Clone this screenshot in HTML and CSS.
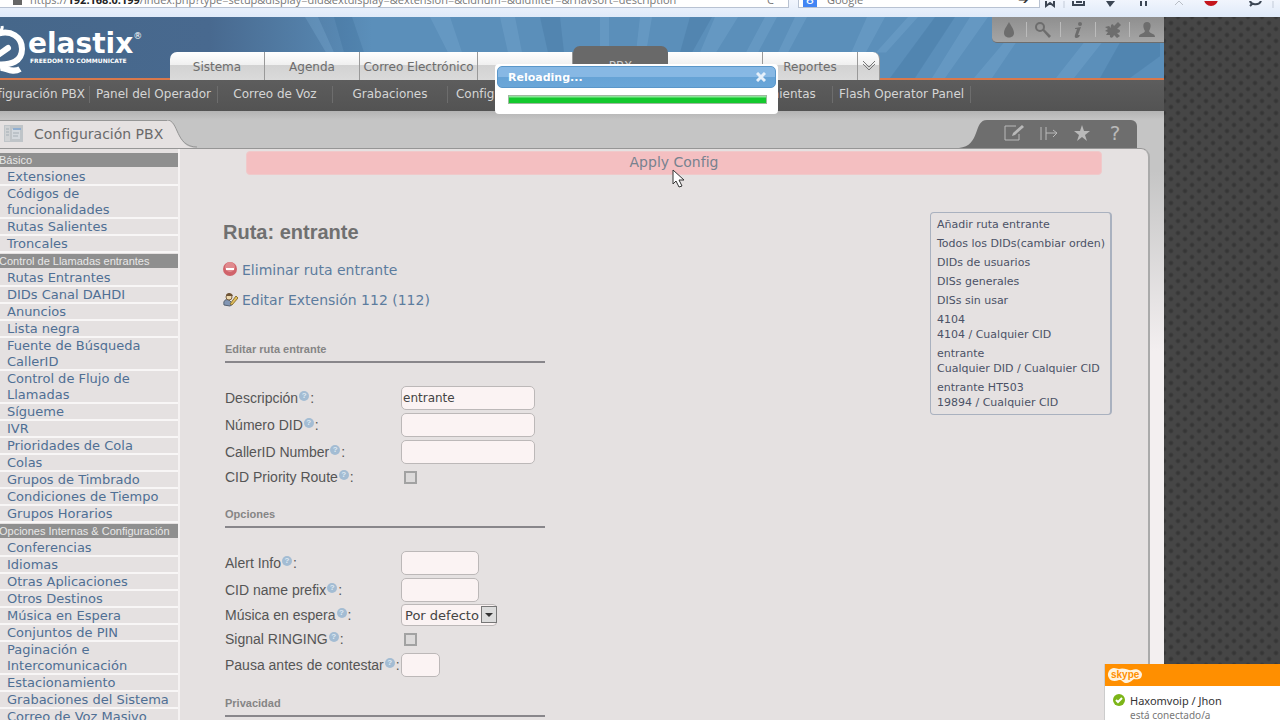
FILE: index.html
```html
<!DOCTYPE html>
<html lang="es">
<head>
    <meta charset="UTF-8">
    <meta name="viewport" content="width=device-width, initial-scale=1.0">
    <title>Elastix - Configuración PBX</title>
    <link rel="stylesheet" href="styles.css">
</head>
<body>

    <div class="browser">
        <div class="address">
            <span class="lock"></span>
            <span class="url">https://<b>192.168.0.199</b>/index.php?type=setup&amp;display=did&amp;extdisplay=&amp;extension=&amp;cidnum=&amp;didfilter=&amp;rnavsort=description</span>
            <span class="reload">C</span>
        </div>
        <div class="search">
            <span class="engine">8</span>
            <input type="text" placeholder="Google" aria-label="Buscar">
            <span class="go">➔</span>
        </div>
        <svg class="browser-icons" width="240" height="16" viewBox="0 -2 240 16" aria-hidden="true">
            <g fill="none" stroke="#3c4654" stroke-width="2">
                <path d="M6 -6V3L10 0L14 3V-6"/>
                <path d="M33 -6V2H44V-6M36 -1H42"/>
                <path d="M101 -4V3M106 -4V3"/>
                <path d="M210 -3C210 2 219 3 221 -2M210 3L213 0"/>
            </g>
            <path d="M66 -2H75L70 4Z" fill="#3c4654"/>
            <path d="M135 2L139 -2L143 2" fill="none" stroke="#b9bec6"/>
            <circle cx="171" cy="-4" r="7" fill="#c4151c"/>
            <path d="M24 -2V5M233 -2V5" stroke="#c3cbd8"/>
        </svg>
    </div>

    <div class="page">
        <div class="app">

            <header class="header">
                <svg class="rays" viewBox="0 0 1164 62" preserveAspectRatio="none" aria-hidden="true">
                    <g fill="#86b6dc" opacity=".25">
                        <path d="M305 0H318L334 36H326Z"/>
                        <path d="M430 0H450L462 36H448Z"/>
                        <path d="M500 0H515L522 36H508Z"/>
                        <path d="M600 0H609V30H600Z"/>
                        <path d="M640 0H652L646 36H636Z"/>
                        <path d="M715 0H738L716 36H700Z"/>
                        <path d="M765 0H777L758 36H746Z"/>
                        <path d="M795 0H807L788 36H778Z"/>
                        <path d="M867 0H885L852 62H840Z"/>
                        <path d="M908 0H918L886 36H876Z"/>
                        <path d="M970 0H988L945 62H932Z"/>
                        <path d="M1004 26H1016L992 62H974Z"/>
                        <path d="M1084 26H1102L1074 62H1056Z"/>
                    </g>
                    <g fill="#2f5f8a" opacity=".2">
                        <path d="M334 0H352L364 36H344Z"/>
                        <path d="M540 0H560L564 36H548Z"/>
                        <path d="M690 0H712L692 36H680Z"/>
                        <path d="M935 0H955L915 62H890Z"/>
                        <path d="M1120 26H1160V40L1130 62H1100Z"/>
                    </g>
                </svg>
                <div class="logo">
                    <svg width="28" height="56" viewBox="0 0 28 56" aria-hidden="true">
                        <g fill="none" stroke="#fff">
                            <path d="M-6 13C12 6 22 16 22 27C22 39 12 44 -6 42" stroke-width="6"/>
                            <path d="M-2 33L8 26" stroke-width="6" stroke-linecap="round"/>
                            <path d="M0 46C5 45 12 52 20 47" stroke-width="6"/>
                            <path d="M-3 9C0 9 3 8 2 4" stroke-width="3"/>
                        </g>
                    </svg>
                    <div class="brand">
                        <span class="brand-name">elastix<sup>®</sup></span>
                        <span class="slogan">FREEDOM TO COMMUNICATE</span>
                    </div>
                </div>
                <nav class="tabs">
                    <a class="tab" href="#">Sistema</a>
                    <a class="tab" href="#">Agenda</a>
                    <a class="tab wide" href="#">Correo Electrónico</a>
                    <span class="tab"></span>
                    <a class="tab active" href="#">PBX</a>
                    <span class="tab"></span>
                    <a class="tab" href="#">Reportes</a>
                    <button class="tab more" type="button" aria-label="Más">
                        <svg width="14" height="12" viewBox="0 0 14 12"><path d="M1 1L7 7L13 1M1 4L7 10L13 4" fill="none" stroke="#777" stroke-width="1"/></svg>
                    </button>
                </nav>
                <div class="tools">
                    <button type="button" aria-label="Tema"><svg width="18" height="18" viewBox="0 0 18 18"><path d="M9 1C11 5 14 8 14 12C14 18 4 18 4 12C4 8 7 5 9 1Z"/></svg></button>
                    <button type="button" aria-label="Buscar"><svg width="18" height="18" viewBox="0 0 18 18"><circle cx="6" cy="6" r="4" fill="none" stroke="#6d6d6d" stroke-width="2"/><path d="M8 9L10 8L17 15L15 17Z"/></svg></button>
                    <button type="button" aria-label="Información"><svg width="18" height="18" viewBox="0 0 18 18"><circle cx="11" cy="3" r="2"/><path d="M6 7L12 6L9 14L11 14L10 16C7 18 5 17 6 14L8 8L6 8Z"/></svg></button>
                    <button type="button" aria-label="Módulos"><svg width="18" height="18" viewBox="0 0 18 18"><path d="M1 6L5 5L7 7C6 3 9 2 10 5L14 1L17 4L13 8C17 8 17 12 13 12L16 15L13 17L10 14C9 18 5 17 6 14L2 14L4 11L1 10L4 8Z"/></svg></button>
                    <button type="button" aria-label="Usuario"><svg width="18" height="18" viewBox="0 0 18 18"><path d="M9 1C14 1 13 7 11 10C12 13 17 12 17 16H1C1 12 6 13 7 10C5 7 4 1 9 1Z"/></svg></button>
                </div>
            </header>

            <nav class="submenu">
                <a class="first" href="#">Configuración PBX</a>
                <a href="#">Panel del Operador</a>
                <a href="#">Correo de Voz</a>
                <a href="#">Grabaciones</a>
                <a class="batch" href="#">Configuración por Lotes</a>
                <a href="#">Herramientas</a>
                <a href="#">Flash Operator Panel</a>
            </nav>

            <div class="workspace">
                <div class="title-row">
                    <div class="title">
                        <svg width="19" height="19" viewBox="0 0 19 19" aria-hidden="true">
                            <path d="M0 1H19V18H0Z" fill="#bfc4c8"/>
                            <path d="M1 2H6V17H1Z" fill="#d0d2d4"/>
                            <path d="M8 5H16V15H8Z" fill="#d3d8dd"/>
                            <path d="M9 4H17V6H9Z" fill="#8fadd0"/>
                            <path d="M2 5H5M2 8H5M2 11H5M9 9H15M9 12H14" stroke="#a5aeb5"/>
                        </svg>
                        Configuración PBX
                    </div>
                    <svg class="title-curve" width="30" height="28" viewBox="0 0 30 28" aria-hidden="true">
                        <path d="M0 0C12 0 8 28 30 28H0Z" fill="#e5e1e1"/>
                        <path d="M0 0C12 0 8 27 30 27" fill="none" stroke="#969696"/>
                    </svg>
                    <svg class="actions-curve" width="28" height="28" viewBox="0 0 28 28" aria-hidden="true">
                        <path d="M28 0C14 0 22 26 0 28H28Z" fill="#6e6e6e"/>
                    </svg>
                    <div class="actions">
                        <button type="button" aria-label="Editar"><svg width="20" height="18" viewBox="0 0 20 18"><path d="M12 2H1V16H15V10" fill="none" stroke="#b9b9b9" stroke-width="1"/><path d="M8 12L9 9L18 1L20 3L11 11Z" fill="#b9b9b9"/></svg></button>
                        <button type="button" aria-label="Expandir"><svg width="20" height="18" viewBox="0 0 20 18"><path d="M2 3V16M7 3V16M7 9H18M14 6L18 9L14 13" fill="none" stroke="#b9b9b9" stroke-width="1"/></svg></button>
                        <button type="button" aria-label="Favorito"><svg width="18" height="18" viewBox="0 0 18 18"><path d="M9 1L11 7H17L12 11L14 17L9 13L4 17L6 11L1 7H7Z" fill="#b9b9b9"/></svg></button>
                        <button class="help-button" type="button">?</button>
                    </div>
                </div>

                <div class="panel">
                    <aside class="sidebar">
                        <h3>Básico</h3>
                        <ul>
                            <li><a href="#">Extensiones</a></li>
                            <li><a href="#">Códigos de<br>funcionalidades</a></li>
                            <li><a href="#">Rutas Salientes</a></li>
                            <li><a href="#">Troncales</a></li>
                        </ul>
                        <h3>Control de Llamadas entrantes</h3>
                        <ul>
                            <li><a href="#">Rutas Entrantes</a></li>
                            <li><a href="#">DIDs Canal DAHDI</a></li>
                            <li><a href="#">Anuncios</a></li>
                            <li><a href="#">Lista negra</a></li>
                            <li><a href="#">Fuente de Búsqueda<br>CallerID</a></li>
                            <li><a href="#">Control de Flujo de<br>Llamadas</a></li>
                            <li><a href="#">Sígueme</a></li>
                            <li><a href="#">IVR</a></li>
                            <li><a href="#">Prioridades de Cola</a></li>
                            <li><a href="#">Colas</a></li>
                            <li><a href="#">Grupos de Timbrado</a></li>
                            <li><a href="#">Condiciones de Tiempo</a></li>
                            <li><a href="#">Grupos Horarios</a></li>
                        </ul>
                        <h3>Opciones Internas &amp; Configuración</h3>
                        <ul>
                            <li><a href="#">Conferencias</a></li>
                            <li><a href="#">Idiomas</a></li>
                            <li><a href="#">Otras Aplicaciones</a></li>
                            <li><a href="#">Otros Destinos</a></li>
                            <li><a href="#">Música en Espera</a></li>
                            <li><a href="#">Conjuntos de PIN</a></li>
                            <li><a href="#">Paginación e<br>Intercomunicación</a></li>
                            <li><a href="#">Estacionamiento</a></li>
                            <li><a href="#">Grabaciones del Sistema</a></li>
                            <li><a href="#">Correo de Voz Masivo</a></li>
                        </ul>
                    </aside>

                    <main class="content">
                        <a class="apply" href="#">Apply Config</a>
                        <div class="columns">
                            <form class="route">
                                <h2>Ruta: entrante</h2>
                                <a class="route-link" href="#">
                                    <svg width="15" height="17" viewBox="0 0 15 17" aria-hidden="true"><circle cx="7" cy="7" r="7" fill="#d0636a"/><circle cx="7" cy="5" r="5" fill="#e08a8e"/><path d="M3 6H11V8H3Z" fill="#fff"/></svg>
                                    Eliminar ruta entrante
                                </a>
                                <a class="route-link" href="#">
                                    <svg width="15" height="17" viewBox="0 0 15 17" aria-hidden="true"><path d="M1 13C0 8 3 7 6 8L10 12L7 14Z" fill="#8296b4" stroke="#55606f"/><circle cx="6" cy="5" r="3" fill="#edd9b0" stroke="#7a6244"/><path d="M3 4C3 0 9 0 10 4" fill="#6e5436"/><path d="M7 12L13 4L15 6L9 13Z" fill="#e3bf5c" stroke="#8d7434"/></svg>
                                    Editar Extensión 112 (112)
                                </a>

                                <h5 class="first-section">Editar ruta entrante</h5>
                                <div class="row"><label for="description">Descripción<i>?</i>:</label><input type="text" id="description" value="entrante"></div>
                                <div class="row"><label for="did">Número DID<i>?</i>:</label><input type="text" id="did"></div>
                                <div class="row"><label for="callerid">CallerID Number<i>?</i>:</label><input type="text" id="callerid"></div>
                                <div class="row check"><label for="priority">CID Priority Route<i>?</i>:</label><input type="checkbox" id="priority"></div>

                                <h5>Opciones</h5>
                                <div class="row"><label for="alert">Alert Info<i>?</i>:</label><input class="medium" type="text" id="alert"></div>
                                <div class="row"><label for="prefix">CID name prefix<i>?</i>:</label><input class="medium" type="text" id="prefix"></div>
                                <div class="row check"><label for="music">Música en espera<i>?</i>:</label>
                                    <span class="select-box">
                                        <select id="music"><option>Por defecto</option></select>
                                        <span class="select-arrow"></span>
                                    </span>
                                </div>
                                <div class="row check"><label for="ringing">Signal RINGING<i>?</i>:</label><input type="checkbox" id="ringing"></div>
                                <div class="row"><label for="pause">Pausa antes de contestar<i>?</i>:</label><input class="short" type="text" id="pause"></div>

                                <h5>Privacidad</h5>
                            </form>

                            <nav class="rnav">
                                <a href="#">Añadir ruta entrante</a>
                                <a href="#">Todos los DIDs(cambiar orden)</a>
                                <a href="#">DIDs de usuarios</a>
                                <a href="#">DISs generales</a>
                                <a href="#">DISs sin usar</a>
                                <a href="#">4104<br>4104 / Cualquier CID</a>
                                <a href="#">entrante<br>Cualquier DID / Cualquier CID</a>
                                <a href="#">entrante HT503<br>19894 / Cualquier CID</a>
                            </nav>
                        </div>
                    </main>
                </div>
            </div>
        </div>
        <div class="backdrop"></div>
    </div>

    <div class="dialog" role="dialog" aria-labelledby="dialog-title">
        <div class="dialog-title">
            <span id="dialog-title">Reloading...</span>
            <button type="button" aria-label="Cerrar"><svg width="10" height="10" viewBox="0 0 10 10"><path d="M1 1L9 9M9 1L1 9" stroke="#e6f0fa" stroke-width="3"/></svg></button>
        </div>
        <div class="progress"></div>
    </div>

    <svg class="cursor" width="14" height="20" viewBox="0 0 14 20" aria-hidden="true">
        <path d="M1 1V15L4 12L7 18L10 17L7 11H12Z" fill="#fff" stroke="#333"/>
    </svg>

    <div class="toast">
        <div class="toast-head">
            <svg width="36" height="18" viewBox="0 0 36 18" aria-hidden="true">
                <path d="M4 2C7 0 10 2 12 2C17 0 22 4 25 3C29 1 34 3 35 7C35 12 31 13 27 12C24 14 23 16 18 16C15 15 16 13 12 13C8 15 3 14 2 11C0 8 1 4 4 2Z" fill="#fff3de"/>
                <text x="4" y="11" font-size="10" font-weight="bold" font-family="Liberation Sans, sans-serif" fill="#ff8f00">skype</text>
            </svg>
        </div>
        <div class="toast-body">
            <svg width="12" height="12" viewBox="0 0 12 12" aria-hidden="true"><circle cx="6" cy="6" r="6" fill="#7cb518"/><path d="M3 6L5 8L9 4" fill="none" stroke="#fff" stroke-width="2"/></svg>
            <div>
                <div class="contact">Haxomvoip / Jhon</div>
                <div class="status">está conectado/a</div>
            </div>
        </div>
    </div>

</body>
</html>
```

FILE: styles.css
```css
* { box-sizing: border-box; }
body { margin: 0; height: 100vh; overflow: hidden; position: relative; display: flex; flex-direction: column; font-family: "DejaVu Sans", sans-serif; font-size: 13px; color: #555; }
a { text-decoration: none; color: #4f6f94; }
button { padding: 0; border: 0; background: none; }
svg { display: block; flex: none; }

/* browser toolbar */
.browser { height: 17px; flex: none; display: flex; align-items: flex-end; gap: 9px; padding-bottom: 9px; background: linear-gradient(#f1f5fd, #dfeaf9); overflow: hidden; }
.address, .search { height: 16px; display: flex; align-items: center; background: #fff; border-bottom: 1px solid #b8c2d2; border-right: 1px solid #b8c2d2; }
.address { flex: 1; padding-left: 13px; gap: 8px; font-family: "Open Sans", sans-serif; font-size: 11px; color: #777; white-space: nowrap; }
.address b { color: #222; }
.lock { width: 9px; height: 10px; background: #666; }
.reload { margin-left: auto; margin-right: 14px; }
.search { width: 242px; gap: 10px; border-left: 1px solid #b8c2d2; }
.search input { flex: 1; min-width: 0; border: 0; padding: 0; background: none; font: 11px "Open Sans", sans-serif; }
.engine { width: 14px; margin-left: 4px; background: #4285f4; color: #fff; text-align: center; }
.go { margin-right: 10px; color: #333; }
.browser-icons { margin-bottom: -9px; margin-left: -9px; }

.page { flex: 1; min-height: 0; display: flex; }
.app { flex: 1; min-width: 0; display: flex; flex-direction: column; }
.backdrop { width: 116px; background-color: #464646; background-image: radial-gradient(circle, #363636 1px, transparent 3px), radial-gradient(circle, #363636 1px, transparent 3px); background-size: 14px 12px; background-position: 0 0, 7px 6px; }

/* header */
.header { position: relative; height: 63px; flex: none; display: flex; align-items: flex-end; background: linear-gradient(90deg, #46678a, #48698f 18%, #5b8fba 32%, #5b8fba); border-bottom: 2px solid #d9784b; }
.rays { position: absolute; inset: 0; width: 100%; height: 100%; }
.logo { position: relative; width: 170px; align-self: flex-start; display: flex; padding-top: 5px; color: #fff; }
.brand { display: flex; flex-direction: column; padding-top: 8px; }
.brand-name { font-size: 28px; line-height: 27px; font-weight: bold; }
.brand-name sup { font-size: 9px; line-height: 9px; font-weight: normal; vertical-align: 14px; }
.slogan { font-size: 6px; line-height: 7px; font-weight: bold; margin-left: 2px; }
.tabs { position: relative; display: flex; align-items: flex-end; margin-bottom: -2px; }
.tab { width: 95px; height: 28px; line-height: 30px; text-align: center; font-size: 12px; white-space: nowrap; color: #6d6d6d; background: linear-gradient(#fff, #f0f0f0 45%, #d2d2d2 46%, #dadada); border-right: 1px solid #999; }
.tab:first-child { border-top-left-radius: 7px; }
.tab.wide { width: 118px; }
.tab.active { height: 34px; line-height: 40px; border-radius: 7px 7px 0 0; background: #696969; color: #ccc; border: 0; }
.tab.more { width: 22px; border-radius: 0 7px 0 0; display: flex; align-items: center; justify-content: center; }
.tools { position: relative; align-self: flex-start; margin-left: auto; width: 172px; height: 26px; display: flex; background: linear-gradient(#8f8f8f, #a5a5a5); border-bottom: 1px solid #6d6d6d; border-bottom-left-radius: 5px; }
.tools button { flex: 1; display: flex; align-items: center; justify-content: center; border-right: 1px solid #bbb; margin: 5px 0; }
.tools button:last-child { border: 0; }
.tools svg { fill: #6d6d6d; }

.submenu { height: 31px; flex: none; display: flex; align-items: center; background: linear-gradient(#5d5d5d, #535353); }
.submenu a { min-width: 115px; padding: 0 6px; line-height: 17px; margin-bottom: 3px; text-align: center; font-size: 12px; color: #d5d5d5; border-right: 1px solid #6d6d6d; white-space: nowrap; }
.submenu .first { width: 90px; min-width: 0; padding-right: 4px; display: flex; justify-content: flex-end; }
.submenu .batch { width: 270px; text-align: left; padding-left: 8px; }

/* title tab and actions */
.workspace { flex: 1; min-height: 0; display: flex; flex-direction: column; padding: 9px 14px 0 0; background: linear-gradient(#b4b4b4, #c5c5c5 9px, #c5c5c5 60px, #f3eff0 240px); }
.title-row { height: 28px; flex: none; display: flex; }
.title { width: 167px; display: flex; align-items: center; gap: 11px; padding: 0 0 2px 4px; font-size: 14px; color: #6a6a6a; background: #e5e1e1; border-top: 1px solid #969696; white-space: nowrap; }
.actions-curve { margin-left: auto; }
.actions { width: 150px; margin-right: 13px; display: flex; align-items: center; justify-content: space-between; padding: 0 13px 2px 17px; background: #6e6e6e; border-top-right-radius: 6px; }
.help-button { width: 18px; font: 20px "DejaVu Sans", sans-serif; color: #b9b9b9; }
.panel { flex: 1; min-height: 0; display: flex; background: #e5e1e1; border-right: 2px solid #aaa; border-top: 1px solid #969696; border-top-right-radius: 9px; }

/* left menu */
.sidebar { width: 180px; flex: none; padding-top: 4px; border-right: 2px solid #f5f2f2; overflow: hidden; }
.sidebar h3 { margin: 0; height: 14px; font: 11px/14px "Liberation Sans", sans-serif; color: #e8e8e8; background: #8f8f8f; white-space: nowrap; text-indent: -1px; }
.sidebar ul { list-style: none; margin: 0 0 1px; padding: 2px 0 0; }
.sidebar li { line-height: 16px; padding-left: 7px; border-bottom: 1px solid #f8f6f6; box-shadow: inset 0 -1px #f8f6f6; white-space: nowrap; }

/* content */
.content { flex: 1; min-width: 0; padding: 2px 46px 0 66px; }
.apply { display: block; height: 24px; line-height: 21px; text-align: center; font-size: 14px; background: #f4bfc1; border: 1px solid #f0c9ca; border-radius: 4px; color: #77828f; }
.columns { display: flex; justify-content: space-between; margin: 37px -10px 0 -23px; }
.route { width: 322px; }
.route h2 { margin: 0 0 3px; font: bold 20px/40px "Liberation Sans", sans-serif; color: #707070; }
.route-link { display: flex; align-items: center; gap: 4px; height: 30px; font-size: 14px; color: #5c7c9e; }
.route h5 { margin: 0 0 21px 2px; padding-top: 17px; height: 39px; font: bold 11px/16px "Liberation Sans", sans-serif; color: #858585; border-bottom: 2px solid #88868a; }
.route .first-section { margin-top: 9px; }
.row { display: flex; align-items: center; height: 27px; margin-left: 2px; font: 14px "Liberation Sans", sans-serif; }
.row.check { height: 24px; }
.row label { width: 176px; flex: none; white-space: nowrap; }
.row i { display: inline-block; width: 10px; height: 10px; margin: 0 1px; border-radius: 5px; background: #a3bcd3; color: #dfe9f2; font: bold 8px/10px "Liberation Sans", sans-serif; text-align: center; vertical-align: 5px; }
.row input[type="text"] { width: 134px; height: 24px; padding: 0 1px; border: 1px solid #bcb8b8; border-radius: 5px; background: #fbf3f3; font: 12px "DejaVu Sans", sans-serif; color: #444; }
.row input[type="text"].medium { width: 78px; }
.row input[type="text"].short { width: 39px; }
.row input[type="checkbox"] { appearance: none; width: 13px; height: 13px; margin: 0 3px; border: 2px solid #a2a2a2; background: #dcdada; }
.select-box { position: relative; }
.select-box select { display: block; appearance: none; width: 96px; height: 22px; padding: 0 3px; border: 1px solid #bcb8b8; border-radius: 4px; background: #fbf3f3; font: 13px "DejaVu Sans", sans-serif; color: #444; }
.select-arrow { position: absolute; top: 2px; right: 0; width: 16px; height: 17px; border: 1px solid #777; background: #dcdcdc; pointer-events: none; }
.select-arrow::after { content: ""; position: absolute; left: 3px; top: 6px; border: 4px solid transparent; border-top-color: #333; }

.rnav { width: 182px; align-self: flex-start; padding: 2px 6px; border: 1px solid #a9b1bf; border-right-width: 2px; border-radius: 4px; }
.rnav a { display: block; padding: 2px 0; line-height: 15px; font-size: 11px; color: #4b5266; white-space: nowrap; }

/* overlays */
.dialog { position: absolute; top: 64px; left: 495px; width: 283px; height: 50px; padding: 2px; background: #fff; border-radius: 4px; }
.dialog-title { height: 22px; display: flex; align-items: center; justify-content: space-between; padding: 0 9px 0 10px; font-size: 11px; font-weight: bold; color: #fff; background: linear-gradient(#87b8e4 50%, #66a3d6 51%, #6aa6d8); border: 1px solid #5a97ca; border-radius: 5px; }
.progress { height: 9px; margin: 7px 9px 0 11px; border: 1px solid #9fb89f; background: linear-gradient(#8ee69a 1px, #14c92e 2px); }
.cursor { position: absolute; left: 672px; top: 169px; }
.toast { position: absolute; right: 0; bottom: 0; width: 176px; height: 56px; background: #fff; border-left: 1px solid #ccc; overflow: hidden; font-family: "Noto Sans", sans-serif; font-size: 11px; }
.toast-head { height: 22px; padding: 3px 2px; background: #ff8f00; }
.toast-body { display: flex; gap: 5px; padding: 8px; line-height: 14px; }
.contact { color: #333; }
.status { font-size: 10px; color: #777; }
```
